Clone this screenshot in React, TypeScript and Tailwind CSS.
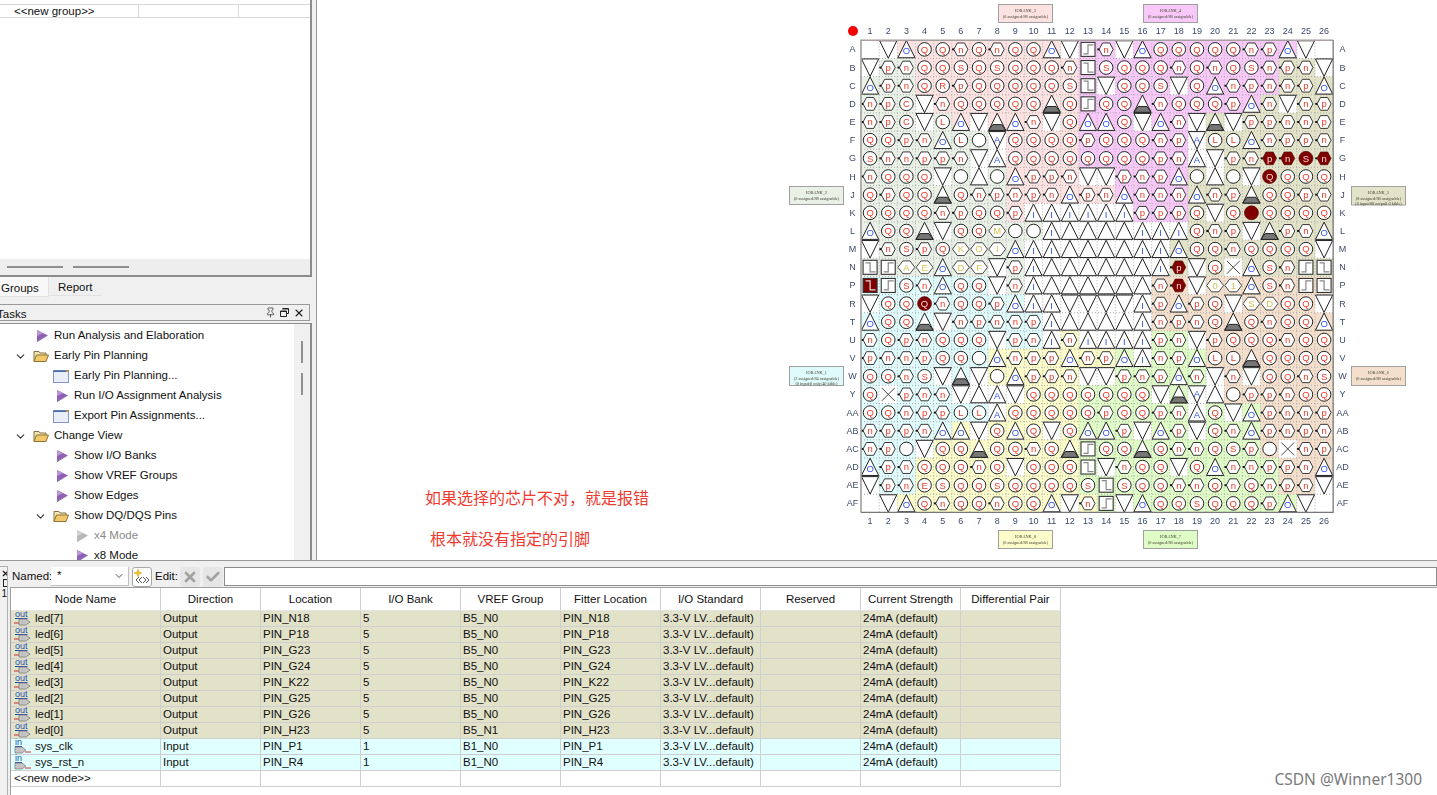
import React from "react";
import { ChevronDown, Pin, X, Check } from "lucide-react";

const rowNames = ["A","B","C","D","E","F","G","H","J","K","L","M","N","P","R","T","U","V","W","Y","AA","AB","AC","AD","AE","AF"];
const pins = [
"_ v ^O Q Q n Q n Q Q ^O v su n v ^O Q Q Q Q Q n p ^O v _",
"v p n Q Q S Q S Q Q Q n sd S Q Q Q n Q n Q S n p n v",
"^O p n Q R p Q Q Q Q Q S sd v Q Q S v Q ^O n p n n p ^O",
"n p C v n Q Q Q Q Q G Q su Q Q G n Q Q Q p ^O n v n p",
"n p C v L ^O v G ^O n v Q ^O ^O Q v ^O n v G v p p n n p",
"Q Q p n ^O L o vA Q Q Q Q p Q Q Q n p vA L L ^O n p p n",
"S n n p p n v ^A Q Q Q Q Q Q Q Q p n ^A v p n #p #n @S #n",
"n Q Q Q v o ^ o ^O p p n v v p n p ^O o ^ o v @Q Q Q Q",
"Q p Q Q G Q n p n p n ^O p n ^O n n n ^O n p G Q Q p n",
"Q Q Q Q n p Q Q p ^I ^I ^I ^I ^I ^I p p p Q v Q @ Q Q Q Q",
"^O Q Q G v Q Q dM o o ^I ^ ^ ^ ^ ^I ^I ^I Q n p v G p n ^O",
"v n S p Q dK dO dI ^O ^I ^I ^ ^ ^ ^ ^I ^I ^O Q Q n Q Q Q Q v",
"sd su dA dE ^O dD dF v p ^I ^ ^ ^ ^ ^ ^ ^I #p v Q X ^O S n su sd",
"!sd su S n ^O Q Q v n ^I ^ ^ ^ ^ ^ ^ n #n v d0 d1 ^O S n su sd",
"v Q Q @Q n Q Q p ^O ^I ^I v v v v ^I p ^O p Q v dS dD Q Q v",
"^O Q Q G v n p n n p ^I ^ ^ ^ ^ ^I n p n Q G Q n Q Q ^O",
"n Q p n Q Q Q v p n ^I n ^I ^I ^I ^I p n v p Q Q Q n Q Q",
"p n n p Q Q o ^O n p p ^O n p ^O ^I n p ^O L L G Q Q Q Q",
"Q Q n S v G v o ^O p p n v v p n p ^O n v n v Q Q n S",
"Q X p n n v ^ ^A v Q Q Q Q Q Q Q v G vA ^ o p p n Q Q",
"Q Q n p p L L ^A Q Q Q Q Q p Q Q p n ^A Q v ^O p n n p",
"n p p n ^O ^O v Q ^O Q v Q ^O ^O p v ^O p v Q n ^O p n p n",
"n p o v Q Q G Q Q n Q G su Q Q G Q n n Q S p o X n p",
"^O p n Q Q Q n Q v Q Q Q sd v n Q Q v Q ^O n n p p n ^O",
"v p n E S Q Q S Q Q Q Q S sd S Q Q n n Q n Q n p n v",
"_ v ^O Q n Q Q n Q Q ^O v n su v ^O Q Q S Q Q Q p ^O v _",
];
const banks = [
"w:2 3:10 4:14","2:3 3:9 4:11 5:3","2:3 3:9 4:11 5:3","2:3 3:9 4:10 5:4","2:5 3:7 4:6 5:8","2:8 3:4 4:6 5:8","2:8 3:4 4:6 5:8","2:8 3:4 4:6 5:8","2:8 3:6 4:4 5:8","2:8 3:1 w:6 4:3 5:8","2:10 w:8 5:8","2:9 w:8 5:9","2:9 w:8 5:9","1:7 w:1 2:1 w:7 6:10","1:9 w:7 6:10","1:10 w:6 6:10","1:10 w:1 8:1 w:4 7:2 6:8","1:7 8:7 7:5 6:7","1:7 8:7 7:6 6:6","1:8 8:4 7:8 6:6","1:8 8:4 7:10 6:4","1:5 8:7 7:10 6:4","1:3 8:9 7:10 6:4","1:3 8:9 7:11 6:3","1:3 8:9 7:11 6:3","8:13 7:13",
];
const bankColor: Record<string, string> = { "1":"#e0fbfb","2":"#e9f0e6","3":"#fde2e2","4":"#f8c9f8","5":"#e3e3c9","6":"#f4dfcc","7":"#dffcc6","8":"#fcfccb",w:"#ffffff" };
const PITCH = 18.16, GX = 861, GY = 40.3;
const RED = "#ee3a28", BLUE = "#2f55f0", YEL = "#d8c050", DARK = "#800000";
const HEX = "-7,0 -3.6,-6.4 3.6,-6.4 7,0 3.6,6.4 -3.6,6.4";

function T({ c, fill = RED, size = 9.5, y = 3.3 }: { c: string; fill?: string; size?: number; y?: number }) {
  return <text y={y} textAnchor="middle" fontSize={size} fill={fill} fontFamily="Liberation Sans, sans-serif">{c}</text>;
}
function PinGlyph({ k }: { k: string }) {
  if (k === "_") return null;
  if (k === "v") return <polygon points="-8.6,-8.6 8.6,-8.6 0,8.8" fill="#fff" stroke="#222" strokeWidth="1" />;
  if (k === "vA") return <g><polygon points="-8.6,-8.6 8.6,-8.6 0,8.8" fill="#fff" stroke="#222" strokeWidth="1" /><T c="A" fill={BLUE} y={2.5} /></g>;
  if (k[0] === "^") {
    const f = k[1] === "O" || k[1] === "I" || k[1] === "A" ? k[1] : "";
    return <g><polygon points="0,-8.8 8.6,8.4 -8.6,8.4" fill="#fff" stroke="#222" strokeWidth="1" />{f && <T c={f} fill={BLUE} y={5} />}</g>;
  }
  if (k === "G") return <g><polygon points="0,-8.8 8.6,8.4 -8.6,8.4" fill="#fff" stroke="#222" strokeWidth="1" /><polygon points="-4.4,2.6 4.4,2.6 8.6,8.4 -8.6,8.4" fill="#777" stroke="#222" strokeWidth="1" /></g>;
  if (k === "o") return <circle r="6.8" fill="#fff" stroke="#222" strokeWidth="1" />;
  if (k === "X") return <g><rect x="-8.6" y="-8.6" width="17.2" height="17.2" fill="#fff" /><path d="M-6.5,-6.5 L6.5,6.5 M6.5,-6.5 L-6.5,6.5" stroke="#333" strokeWidth="0.9" /></g>;
  if (k === "@") return <circle r="7" fill={DARK} stroke="#400" strokeWidth="0.6" />;
  if (k[0] === "@") return <g><circle r="7" fill={DARK} stroke="#400" strokeWidth="0.6" /><T c={k[1]} fill="#f4dada" /></g>;
  if (k[0] === "#") return <g><polygon points={HEX} fill={DARK} stroke="#400" strokeWidth="0.6" /><rect x="-8.8" y="-1" width="2" height="2" fill="#111" /><T c={k[1]} fill="#f4dada" /></g>;
  if (k[0] === "d") return <g><polygon points="-8.4,0 -3.6,-6.4 3.6,-6.4 8.4,0 3.6,6.4 -3.6,6.4" fill="#fff" stroke="#333" strokeWidth="0.9" /><T c={k[1]} fill={YEL} /></g>;
  if (k === "su" || k === "sd" || k === "!sd") {
    const filled = k === "!sd";
    const path = k === "su" ? "M-4.5,4.5 H0 V-4.5 H5.5" : "M-4.5,-4.5 H0 V4.5 H5.5";
    return <g>
      <rect x="-7" y="-7" width="14" height="14" fill={filled ? DARK : "#fff"} stroke="#333" strokeWidth="1.1" />
      <path d={path} fill="none" stroke={filled ? "#ddd" : "#888"} strokeWidth="1.2" />
    </g>;
  }
  if (k === "n" || k === "p") return <g><polygon points={HEX} fill="#fff" stroke="#222" strokeWidth="0.9" /><rect x="-8.8" y="-1" width="2" height="2" fill="#111" /><T c={k} /></g>;
  return <g><circle r="6.8" fill="#fff" stroke="#222" strokeWidth="1" /><T c={k} /></g>;
}

function BankBox({ x, y, w, h, fill, name, lines }: { x: number; y: number; w: number; h: number; fill: string; name: string; lines: string[] }) {
  return <g>
    <rect x={x} y={y} width={w} height={h} fill={fill} stroke="#a0a0a0" strokeWidth="1" />
    <text x={x + w / 2} y={y + 7} textAnchor="middle" fontSize="4.3" fill="#443" fontFamily="Liberation Serif, serif">{name}</text>
    {lines.map((l, i) => <text key={i} x={x + w / 2} y={y + 13 + i * 5} textAnchor="middle" fontSize="4.3" fill="#443" fontFamily="Liberation Serif, serif">{l}</text>)}
  </g>;
}

function PinMap() {
  const cells: React.ReactNode[] = [];
  const glyphs: React.ReactNode[] = [];
  pins.forEach((row, r) => {
    const colors: string[] = [];
    banks[r].split(" ").forEach(s => { const [b, n] = s.split(":"); for (let i = 0; i < +n; i++) colors.push(bankColor[b]); });
    row.split(" ").forEach((k, c) => {
      const white = k === "_" || k === "v" || k === "vA" || k === "X" || k === "^I" || k === "^A" || k === "^";
      cells.push(<rect key={`${r}-${c}`} x={GX + c * PITCH} y={GY + r * PITCH} width={PITCH + 0.2} height={PITCH + 0.2} fill={white ? "#fff" : colors[c]} />);
      glyphs.push(<g key={`${r}-${c}`} transform={`translate(${GX + (c + 0.5) * PITCH},${GY + (r + 0.5) * PITCH})`}><PinGlyph k={k} /></g>);
    });
  });
  const lines: React.ReactNode[] = [];
  for (let i = 0; i <= 26; i++) {
    lines.push(<line key={`v${i}`} x1={GX + i * PITCH} x2={GX + i * PITCH} y1={GY} y2={GY + 26 * PITCH} stroke="#999" strokeWidth="0.8" strokeDasharray="1 2" />);
    lines.push(<line key={`h${i}`} y1={GY + i * PITCH} y2={GY + i * PITCH} x1={GX} x2={GX + 26 * PITCH} stroke="#999" strokeWidth="0.8" strokeDasharray="1 2" />);
  }
  const labelColor = "#3b4a6b";
  return (
    <svg width="1437" height="560" viewBox="0 0 1437 560" className="block -ml-[317px] blur-[0.3px]">
      <circle cx="853" cy="31" r="5" fill="#f40000" />
      {Array.from({ length: 26 }, (_, i) => (
        <g key={i} fontSize="9" fill={labelColor} fontFamily="Liberation Sans, sans-serif" textAnchor="middle">
          <text x={GX + (i + 0.5) * PITCH} y="34">{i + 1}</text>
          <text x={GX + (i + 0.5) * PITCH} y="524">{i + 1}</text>
        </g>
      ))}
      {rowNames.map((n, i) => (
        <g key={n} fontSize="9" fill={labelColor} fontFamily="Liberation Sans, sans-serif" textAnchor="middle">
          <text x="852.5" y={GY + (i + 0.5) * PITCH + 3}>{n}</text>
          <text x="1342.5" y={GY + (i + 0.5) * PITCH + 3}>{n}</text>
        </g>
      ))}
      {cells}
      {lines}
      {glyphs}
      <path d={`M${GX},${GY + 26 * PITCH} V${GY} H${GX + 26 * PITCH}`} fill="none" stroke="#a8a0a0" strokeWidth="1.6" />
      <path d={`M${GX},${GY + 26 * PITCH} H${GX + 26 * PITCH} V${GY}`} fill="none" stroke="#777" strokeWidth="1.2" />
      <BankBox x={998.5} y={4.5} w={54} h={18} fill="#fde2e2" name="IOBANK_3" lines={["(0 assigned/88 assignable)"]} />
      <BankBox x={1143.5} y={4.5} w={54} h={18} fill="#f8c9f8" name="IOBANK_4" lines={["(0 assigned/88 assignable)"]} />
      <BankBox x={789.5} y={186.5} w={54} h={18} fill="#e9f0e6" name="IOBANK_2" lines={["(0 assigned/88 assignable)"]} />
      <BankBox x={1351.5} y={186.5} w={54} h={18.5} fill="#e3e3c9" name="IOBANK_5" lines={["(8 assigned/88 assignable)", "(0 input/88 on/pull 0 kible)"]} />
      <BankBox x={789.5} y={366.5} w={54} h={19} fill="#e0fbfb" name="IOBANK_1" lines={["(2 assigned/84 assignable)", "(0 input/0 only/40 kible)"]} />
      <BankBox x={1351.5} y={366.5} w={54} h={19} fill="#f4dfcc" name="IOBANK_6" lines={["(0 assigned/88 assignable)"]} />
      <BankBox x={998.5} y={530.5} w={54} h={18} fill="#fcfccb" name="IOBANK_8" lines={["(0 assigned/88 assignable)"]} />
      <BankBox x={1143.5} y={530.5} w={54} h={18} fill="#dffcc6" name="IOBANK_7" lines={["(0 assigned/88 assignable)"]} />
    </svg>
  );
}

function Play({ gray }: { gray?: boolean }) {
  return <svg width="14" height="14" viewBox="0 0 14 14" className="shrink-0">
    <polygon points="2,1 13,6.5 2,12" fill={gray ? "#b8b8b8" : "#8e5fb4"} />
    <polygon points="2,1 8,4.2 2,7" fill={gray ? "#d4d4d4" : "#b897d2"} />
    <polygon points="2,12 13,6.5 8,9.5 2,13" fill={gray ? "#999" : "#5d3f86"} />
  </svg>;
}
function Folder() {
  return <svg width="16" height="14" viewBox="0 0 16 14" className="shrink-0">
    <path d="M1,12.5 V2.5 H6 L7,4 H13 V6" fill="#f5e5b0" stroke="#8a7340" strokeWidth="1" />
    <path d="M1,12.5 L3.5,6 H15.5 L13,12.5 Z" fill="#f2c868" stroke="#8a7340" strokeWidth="1" />
  </svg>;
}
function Win() {
  return <svg width="16" height="13" viewBox="0 0 16 13" className="shrink-0">
    <rect x="0.5" y="0.5" width="15" height="12" fill="#e8eefa" stroke="#7f96c4" />
    <rect x="0.5" y="0.5" width="15" height="1.5" fill="#4a68ac" />
    <rect x="13" y="0.5" width="2.5" height="1.5" fill="#e89a30" />
  </svg>;
}

type Task = { pad: string; chev?: boolean; icon: "play" | "gray" | "folder" | "win"; text: string };
const tasks: Task[] = [
  { pad: "pl-[35px]", icon: "play", text: "Run Analysis and Elaboration" },
  { pad: "pl-[14px]", chev: true, icon: "folder", text: "Early Pin Planning" },
  { pad: "pl-[53px]", icon: "win", text: "Early Pin Planning..." },
  { pad: "pl-[55px]", icon: "play", text: "Run I/O Assignment Analysis" },
  { pad: "pl-[53px]", icon: "win", text: "Export Pin Assignments..." },
  { pad: "pl-[14px]", chev: true, icon: "folder", text: "Change View" },
  { pad: "pl-[55px]", icon: "play", text: "Show I/O Banks" },
  { pad: "pl-[55px]", icon: "play", text: "Show VREF Groups" },
  { pad: "pl-[55px]", icon: "play", text: "Show Edges" },
  { pad: "pl-[34px]", chev: true, icon: "folder", text: "Show DQ/DQS Pins" },
  { pad: "pl-[75px]", icon: "gray", text: "x4 Mode" },
  { pad: "pl-[75px]", icon: "play", text: "x8 Mode" },
];

function TaskRow({ t }: { t: Task }) {
  return (
    <div className={`flex items-center h-[20px] shrink-0 ${t.pad} ${t.chev ? "" : "gap-[5px]"}`}>
      {t.chev && <ChevronDown size={13} strokeWidth={2} className="text-[#333] shrink-0 mr-[6px]" />}
      {t.icon === "play" && <Play />}
      {t.icon === "gray" && <Play gray />}
      {t.icon === "folder" && <><Folder /><span className="w-[5px]" /></>}
      {t.icon === "win" && <Win />}
      <span className={t.icon === "gray" ? "text-[#8a8a8a]" : "text-[#111]"}>{t.text}</span>
    </div>
  );
}

const outs = [
  ["led[7]", "PIN_N18", "B5_N0"], ["led[6]", "PIN_P18", "B5_N0"], ["led[5]", "PIN_G23", "B5_N0"], ["led[4]", "PIN_G24", "B5_N0"],
  ["led[3]", "PIN_K22", "B5_N0"], ["led[2]", "PIN_G25", "B5_N0"], ["led[1]", "PIN_G26", "B5_N0"], ["led[0]", "PIN_H23", "B5_N1"],
];
const ins = [["sys_clk", "PIN_P1", "B1_N0"], ["sys_rst_n", "PIN_R4", "B1_N0"]];
const headers = ["Direction", "Location", "I/O Bank", "VREF Group", "Fitter Location", "I/O Standard", "Reserved", "Current Strength", "Differential Pair"];

function NodeIcon({ out }: { out: boolean }) {
  return (
    <span className="relative w-[17px] h-[15px] shrink-0 block">
      <span className="absolute left-[1px] -top-[1px] text-[9px] leading-[9px] text-[#2450b0] underline">{out ? "out" : "in"}</span>
      <svg width="17" height="8" viewBox="0 0 17 8" className="absolute left-0 top-[7px]">
        {out ? <path d="M0,5 H5" stroke="#c83030" strokeWidth="1" /> : <path d="M11,6 H17" stroke="#c83030" strokeWidth="1" />}
        <polygon points={out ? "5,1 12,1 16,4 12,7 5,7" : "1,1 8,1 12,4 8,7 1,7"} fill="#c4c4c4" stroke="#777" strokeWidth="0.7" />
      </svg>
    </span>
  );
}

function Row({ name, dir, loc, bank, vref, bg, out }: { name: string; dir: string; loc: string; bank: string; vref: string; bg: string; out: boolean }) {
  const cells = [dir, loc, bank, vref, loc, "3.3-V LV...default)", "", "24mA (default)", ""];
  return (
    <div className={`flex h-[16px] w-[1050px] border-b border-[#cfcfcf] ${bg}`}>
      <div className="w-[150px] shrink-0 border-r border-[#cfcfcf] flex items-center pl-[3px] gap-[4px]">
        <NodeIcon out={out} />
        <span>{name}</span>
      </div>
      {cells.map((c, i) => (
        <div key={i} className="w-[100px] shrink-0 border-r border-[#cfcfcf] pl-[2px] leading-[15px] whitespace-nowrap overflow-hidden">{c}</div>
      ))}
    </div>
  );
}

export default function App() {
  return (
    <div className="relative w-[1437px] h-[795px] overflow-hidden bg-[#f0f0f0] text-[11.5px] text-[#111] font-['Liberation_Sans',sans-serif]">
      <div className="flex h-[561px] border-b border-[#9a9a9a]">
        {/* left column */}
        <div className="w-[312px] shrink-0 flex flex-col">
          <div className="h-[277px] border-r-2 border-b-2 border-[#8c8c8c] bg-white flex flex-col">
            <div className="h-[5px] border-b border-[#d8d8d8]" />
            <div className="flex h-[13px] border-b border-[#d8d8d8]">
              <div className="w-[139px] border-r border-[#d8d8d8] pl-[14px] leading-[12px]">&lt;&lt;new group&gt;&gt;</div>
              <div className="w-[100px] border-r border-[#d8d8d8]" />
            </div>
            <div className="flex-1" />
            <div className="h-[16px] bg-[#eeeeee] flex items-center gap-[10px] pl-[7px]">
              <div className="w-[56px] h-[2px] bg-[#8f8f8f]" />
              <div className="w-[56px] h-[2px] bg-[#8f8f8f]" />
            </div>
          </div>
          <div className="flex h-[21px] items-start">
            <div className="w-[49px] h-[20px] bg-[#f8f8f8] border-r border-b border-[#e2e2e2] leading-[23px] pl-[1px]">Groups</div>
            <div className="w-[53px] h-[19px] bg-[#f0f0f0] border-b border-[#e2e2e2] pl-[9px] leading-[21px]">Report</div>
          </div>
          <div className="mt-[6px] h-[17px] w-[317px] border border-[#9a9a9a] flex items-center -ml-[7px] pr-[4px] shrink-0">
            <span className="pl-[3px] pt-[3px] leading-[15px]">Tasks</span>
            <span className="ml-auto flex items-center gap-[4px] text-[#222]">
              <Pin size={11} strokeWidth={1.5} />
              <svg width="9" height="9" viewBox="0 0 9 9"><path d="M2.5,0.5 H8.5 V5.5 H6.5 M0.5,3 H6.5 V8.5 H0.5 Z" fill="none" stroke="#222" /><path d="M2.5,1 H8.5 M0.5,3.5 H6.5" stroke="#222" /></svg>
              <X size={12} strokeWidth={2.2} />
            </span>
          </div>
          <div className="mt-[2px] flex-1 flex min-h-0 border-t border-r-2 border-[#8c8c8c]">
            <div className="flex-1 bg-white flex flex-col overflow-hidden pt-[2px]">
              {tasks.map(t => <TaskRow key={t.text} t={t} />)}
            </div>
            <div className="w-[16px] bg-[#f0f0f0] flex flex-col items-center pt-[17px] gap-[10px]">
              <div className="w-[2px] h-[22px] bg-[#8f8f8f]" />
              <div className="w-[2px] h-[22px] bg-[#8f8f8f]" />
            </div>
          </div>
        </div>
        {/* main canvas */}
        <div className="ml-[4px] flex-1 min-w-0 relative bg-white border-l border-[#9a9a9a] overflow-hidden">
          <PinMap />
          <div className="absolute left-[108px] top-[486px] text-[16px] leading-[22px] text-[#f03a30] font-['Noto_Sans_CJK_SC',sans-serif]">如果选择的芯片不对，就是报错</div>
          <div className="absolute left-[113px] top-[527px] text-[16px] leading-[22px] text-[#f03a30] font-['Noto_Sans_CJK_SC',sans-serif]">根本就没有指定的引脚</div>
        </div>
      </div>

      {/* node editor */}
      <div className="flex h-[234px] pt-[5px]">
        <div className="w-[8px] shrink-0 border-t border-r border-[#b0b0b0] flex flex-col items-end text-[10px] leading-[11px] pt-[2px] overflow-hidden">
          <X size={9} strokeWidth={3} className="-mr-[3px] shrink-0" />
          <span className="w-[8px] h-[8px] border border-[#222] -mr-[4px] shrink-0 my-[1px]" />
          <span>1</span>
        </div>
        <div className="flex-1 min-w-0 flex flex-col pl-[2px]">
          <div className="flex items-center h-[21px] pl-[2px] gap-[3px]">
            <span className="w-[36px]">Named:</span>
            <div className="w-[78px] h-[19px] bg-white border-b border-r border-[#c0c0c0] flex items-center pl-[6px]">
              <span>*</span>
              <ChevronDown size={12} className="ml-auto mr-[3px] text-[#555]" />
            </div>
            <div className="w-[20px] h-[20px] rounded-[3px] border border-[#a8a8a8] bg-white">
              <svg width="18" height="18" viewBox="0 0 18 18" className="block">
                <path d="M5,1 L6,4 L9,5 L6,6 L5,9 L4,6 L1,5 L4,4 Z" fill="#f0c020" stroke="#e0a010" strokeWidth="0.5" />
                <path d="M6,9 L3,12 L6,15 M9,9 L6,12 L9,15 M10,9 L13,12 L10,15 M13,9 L16,12 L13,15" fill="none" stroke="#444" strokeWidth="0.9" />
              </svg>
            </div>
            <span className="w-[22px]">Edit:</span>
            <div className="w-[20px] h-[20px] rounded-[3px] bg-[#e6e6e6] flex items-center justify-center"><X size={16} strokeWidth={4} className="text-[#a2a2a2]" /></div>
            <div className="w-[20px] h-[20px] rounded-[3px] bg-[#e6e6e6] flex items-center justify-center"><Check size={16} strokeWidth={4} className="text-[#a2a2a2]" /></div>
            <div className="flex-1 h-[19px] bg-white border border-[#8c8c8c] -ml-[2px]" />
          </div>
          <div className="flex-1 bg-white border-l border-t border-[#a0a0a0] overflow-hidden">
            <div className="flex h-[23px] w-[1050px] border-b border-[#e4e4e4]">
              <div className="w-[150px] shrink-0 border-r border-[#cfcfcf] text-center leading-[22px]">Node Name</div>
              {headers.map(h => <div key={h} className="w-[100px] shrink-0 border-r border-[#cfcfcf] text-center leading-[22px]">{h}</div>)}
            </div>
            {outs.map(o => <Row key={o[0]} name={o[0]} dir="Output" loc={o[1]} bank="5" vref={o[2]} bg="bg-[#e2e2c9]" out />)}
            {ins.map(o => <Row key={o[0]} name={o[0]} dir="Input" loc={o[1]} bank="1" vref={o[2]} bg="bg-[#e0ffff]" out={false} />)}
            <div className="flex h-[16px] w-[1050px] border-b border-[#cfcfcf]">
              <div className="w-[150px] shrink-0 border-r border-[#cfcfcf] pl-[3px] leading-[15px]">&lt;&lt;new node&gt;&gt;</div>
              {headers.map(h => <div key={h} className="w-[100px] shrink-0 border-r border-[#cfcfcf]" />)}
            </div>
          </div>
        </div>
      </div>
      <div className="absolute right-[15px] bottom-[6px] text-[15.5px] leading-[20px] text-[#7a7a7a] font-['Noto_Sans',sans-serif]">CSDN @Winner1300</div>
    </div>
  );
}
